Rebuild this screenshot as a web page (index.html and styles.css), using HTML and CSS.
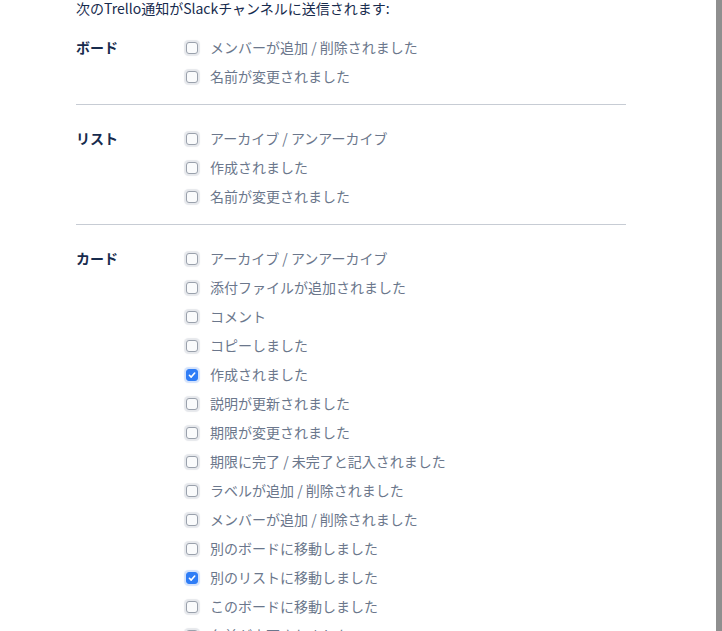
FILE: index.html
```html
<!DOCTYPE html>
<html lang="ja">
<head>
<meta charset="utf-8">
<title>Trello通知</title>
<link rel="stylesheet" href="styles.css">
</head>
<body>
<div class="page">
  <main class="content">
    <p class="intro">次のTrello通知がSlackチャンネルに送信されます:</p>

    <section class="group first">
      <h3 class="group-title">ボード</h3>
      <ul class="items">
        <li class="item"><span class="box"></span><span class="label">メンバーが追加 / 削除されました</span></li>
        <li class="item"><span class="box"></span><span class="label">名前が変更されました</span></li>
      </ul>
    </section>

    <section class="group">
      <h3 class="group-title">リスト</h3>
      <ul class="items">
        <li class="item"><span class="box"></span><span class="label">アーカイブ / アンアーカイブ</span></li>
        <li class="item"><span class="box"></span><span class="label">作成されました</span></li>
        <li class="item"><span class="box"></span><span class="label">名前が変更されました</span></li>
      </ul>
    </section>

    <section class="group last">
      <h3 class="group-title">カード</h3>
      <ul class="items">
        <li class="item"><span class="box"></span><span class="label">アーカイブ / アンアーカイブ</span></li>
        <li class="item"><span class="box"></span><span class="label">添付ファイルが追加されました</span></li>
        <li class="item"><span class="box"></span><span class="label">コメント</span></li>
        <li class="item"><span class="box"></span><span class="label">コピーしました</span></li>
        <li class="item"><span class="box checked"><svg viewBox="0 0 12 12" width="12" height="12"><path d="M3.4 6.3 L5.2 8.1 L8.7 4" fill="none" stroke="#fff" stroke-width="1.6" stroke-linecap="round" stroke-linejoin="round"/></svg></span><span class="label">作成されました</span></li>
        <li class="item"><span class="box"></span><span class="label">説明が更新されました</span></li>
        <li class="item"><span class="box"></span><span class="label">期限が変更されました</span></li>
        <li class="item"><span class="box"></span><span class="label">期限に完了 / 未完了と記入されました</span></li>
        <li class="item"><span class="box"></span><span class="label">ラベルが追加 / 削除されました</span></li>
        <li class="item"><span class="box"></span><span class="label">メンバーが追加 / 削除されました</span></li>
        <li class="item"><span class="box"></span><span class="label">別のボードに移動しました</span></li>
        <li class="item"><span class="box checked"><svg viewBox="0 0 12 12" width="12" height="12"><path d="M3.4 6.3 L5.2 8.1 L8.7 4" fill="none" stroke="#fff" stroke-width="1.6" stroke-linecap="round" stroke-linejoin="round"/></svg></span><span class="label">別のリストに移動しました</span></li>
        <li class="item"><span class="box"></span><span class="label">このボードに移動しました</span></li>
        <li class="item"><span class="box"></span><span class="label">名前が変更されました</span></li>
      </ul>
    </section>
  </main>
  <div class="edge"></div>
</div>
</body>
</html>
```

FILE: styles.css
```css
html, body {
  margin: 0;
  padding: 0;
  background: #ffffff;
}

body {
  font-family: "Noto Sans CJK JP", "Noto Sans", "Liberation Sans", sans-serif;
  font-size: 14px;
  color: #172b4d;
}

.page {
  display: flex;
  height: 631px;
  overflow: hidden;
}

.content {
  flex: 1;
  padding-left: 76px;
}

.edge {
  width: 6px;
  background: #8f8f8f;
  flex-shrink: 0;
}

.intro {
  margin: 0;
  line-height: 16px;
  color: #172b4d;
}

.group {
  display: grid;
  grid-template-columns: 110px 1fr;
  width: 550px;
  padding: 18.5px 0 13.5px;
  border-bottom: 1px solid #c7ccd4;
}

.group.first {
  padding-top: 16.5px;
}

.group.last {
  border-bottom: none;
}

.group-title {
  margin: 0;
  font-size: 14px;
  font-weight: 700;
  line-height: 29px;
  color: #172b4d;
}

.items {
  list-style: none;
  margin: 0;
  padding: 0;
}

.item {
  display: flex;
  align-items: center;
  height: 29px;
}

.box {
  width: 12px;
  height: 12px;
  box-sizing: border-box;
  border: 1px solid #9aa1ac;
  border-radius: 3px;
  background: #fafbfc;
  box-shadow: 0 0 1px 1.5px #e6e8ec;
  margin: 2px 12px 0 0;
  flex-shrink: 0;
  display: flex;
}

.box.checked {
  background: #2f7df6;
  border-color: #2f7df6;
  box-shadow: 0 0 1px 1.5px #d3e2fb;
}

.box svg {
  display: block;
  margin: -1px;
}

.label {
  color: #6b778c;
  line-height: 20px;
}
```
